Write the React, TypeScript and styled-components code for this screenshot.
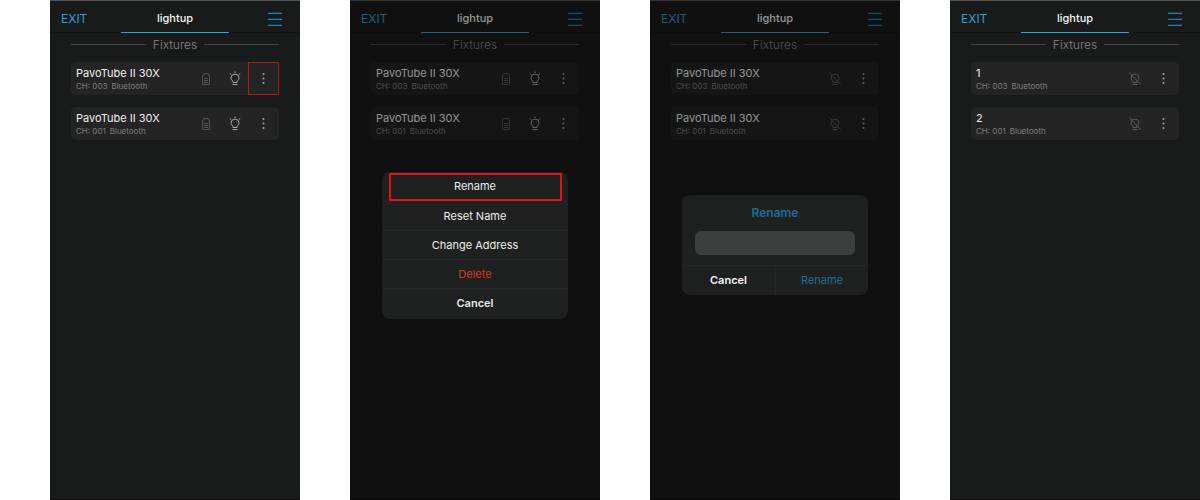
import React from "react";
import styled, { createGlobalStyle, css } from "styled-components";

const GlobalStyle = createGlobalStyle`
  *, *::before, *::after { box-sizing: border-box; }
  body {
    margin: 0;
    background: #ffffff;
    font-family: Inter, "Liberation Sans", sans-serif;
  }
  button, input { font: inherit; color: inherit; }
`;

const Gallery = styled.main`
  display: grid;
  grid-template-columns: repeat(4, 1fr);
  column-gap: 50px;
  padding-left: 50px;
  min-height: 100vh;
`;

const Phone = styled.section`
  position: relative;
  display: flex;
  flex-direction: column;
  background: #191b1a;
  border-top: 1px solid #525453;
  border-bottom: 1px solid #100d10;
`;

const Header = styled.header`
  display: grid;
  grid-template-columns: 1fr 108px 1fr;
  height: 32px;
  padding: 0 10px;
  border-bottom: 1px solid #131514;
`;

const ExitButton = styled.button`
  justify-self: start;
  padding: 4px 1px 0;
  border: 0;
  background: none;
  color: #2b9fd6;
  font-size: 12px;
  line-height: 16px;
  cursor: pointer;
`;

const TabTitle = styled.h1`
  display: flex;
  align-items: center;
  justify-content: center;
  height: 32px;
  margin: 0;
  padding-top: 3px;
  border-bottom: 1px solid #2ba5e0;
  color: #f4f4f4;
  font-size: 11px;
  font-weight: 500;
  line-height: 16px;
`;

const MenuButton = styled.button`
  display: flex;
  align-items: center;
  justify-self: end;
  padding: 4px 8px 0;
  border: 0;
  background: none;
  color: #1585ba;
  cursor: pointer;
`;

const Body = styled.div`
  padding: 5px 21px 0;
`;

const SectionTitle = styled.h2`
  display: flex;
  align-items: center;
  gap: 7px;
  margin: 0 0 10px;
  color: #858786;
  font-size: 12px;
  font-weight: 300;
  line-height: 14px;

  &::before,
  &::after {
    content: "";
    flex: 1;
    height: 1px;
    margin-bottom: 1px;
    background: #434544;
  }
`;

const FixtureList = styled.ul`
  display: flex;
  flex-direction: column;
  gap: 12px;
  margin: 0;
  padding: 0;
  list-style: none;
`;

const FixtureCard = styled.li`
  display: flex;
  height: 33px;
  padding: 0 1px 0 5px;
  border-radius: 5px;
  background: #242424;
`;

const FixtureInfo = styled.div`
  flex: 1;
  padding-top: 4px;
  white-space: nowrap;
`;

const FixtureName = styled.div`
  color: #f0f0f0;
  font-size: 11px;
  line-height: 14px;
`;

const FixtureMeta = styled.div`
  display: flex;
  gap: 4px;
  color: #7d7f7e;
  font-size: 8px;
  line-height: 12px;
`;

const IconSlot = styled.span`
  display: flex;
  align-items: center;
  justify-content: center;
  width: 29px;
  color: #525553;
`;

const IconButton = styled.button<{ $dim?: boolean; $marked?: boolean }>`
  display: flex;
  align-items: center;
  justify-content: center;
  width: 29px;
  margin: 1px 0;
  padding: 0;
  border: 0;
  background: none;
  color: ${({ $dim }) => ($dim ? "#5a5c5a" : "#a2a4a3")};
  cursor: pointer;
  ${({ $marked }) =>
    $marked &&
    css`
      outline: 1px solid #b3181c;
    `}
`;

const Backdrop = styled.div`
  position: absolute;
  inset: -1px 0;
  display: flex;
  align-items: center;
  justify-content: center;
  padding-bottom: 10px;
  background: rgba(0, 0, 0, 0.4);
`;

const Sheet = styled.div`
  width: 186px;
  padding-bottom: 2px;
  border-radius: 8px;
  background: #1f2120;
  overflow: hidden;
`;

const SheetAction = styled.button<{ $tone?: "danger" | "strong"; $marked?: boolean }>`
  position: relative;
  display: block;
  width: 100%;
  padding: 7px 0;
  border: 0;
  background: none;
  color: ${({ $tone }) => ($tone === "danger" ? "#d13a1b" : "#ececec")};
  font-size: 11px;
  font-weight: ${({ $tone }) => ($tone === "strong" ? 600 : 400)};
  line-height: 15px;
  cursor: pointer;

  & + & { border-top: 1px solid #252726; padding-bottom: 6px; }

  ${({ $marked }) =>
    $marked &&
    css`
      &::after {
        content: "";
        position: absolute;
        inset: 1px 6px 0 7px;
        border: 2px solid #dc1417;
      }
    `}
`;

const DialogForm = styled.form`
  width: 186px;
  border-radius: 8px;
  background: #1f2120;
  overflow: hidden;
`;

const DialogBody = styled.div`
  padding: 10px 13px;
`;

const DialogTitle = styled.label`
  display: block;
  margin-bottom: 10px;
  color: #176f9a;
  font-size: 12px;
  font-weight: 600;
  line-height: 16px;
  text-align: center;
`;

const NameInput = styled.input`
  display: block;
  width: 100%;
  height: 24px;
  padding: 0 8px;
  border: 0;
  border-radius: 6px;
  background: #3d3f3e;
  color: #ececec;
  font-size: 12px;
`;

const DialogActions = styled.div`
  display: grid;
  grid-template-columns: 1fr 1fr;
  border-top: 1px solid #252726;
`;

const DialogButton = styled.button<{ $accent?: boolean }>`
  padding: 7px 0;
  border: 0;
  background: none;
  color: ${({ $accent }) => ($accent ? "#176f9a" : "#f4f4f4")};
  font-size: 11px;
  font-weight: ${({ $accent }) => ($accent ? 400 : 600)};
  line-height: 15px;
  cursor: pointer;

  & + & { border-left: 1px solid #252726; }
`;

const MenuIcon = () => (
  <svg width="14" height="14" viewBox="0 0 14 14" fill="currentColor" aria-hidden="true">
    <path d="M0 .8h14v1.300H0zM0 6.800h14v1.300H0zM0 12.700h14v1.300H0z" />
  </svg>
);

const BatteryIcon = () => (
  <svg width="8" height="12" viewBox="0 0 8 12" fill="none" stroke="currentColor" aria-hidden="true">
    <path d="M.5 11.500V2.300L2 1.800V.5h4v1.300l1.500.5v9.200zM2 5.500h4M2 7.500h4M2 9.500h4" />
  </svg>
);

const BulbIcon = () => (
  <svg width="12" height="15" viewBox="0 0 12 15" fill="none" stroke="currentColor" aria-hidden="true">
    <path d="M4 11.500V10.100C2.800 9.400 2 8.300 2 7.100a4 4 0 0 1 8 0c0 1.200-.8 2.300-2 3v1.400zM3.500 13.500h5M6 .5v1.500M.8 2.500l1.500 1.200M11.200 2.500L9.700 3.700" />
  </svg>
);

const BulbOffIcon = () => (
  <svg width="12" height="15" viewBox="0 0 12 15" fill="none" stroke="currentColor" aria-hidden="true">
    <path d="M4 11.500V10.100C2.800 9.400 2 8.300 2 7.100a4 4 0 0 1 8 0c0 1.200-.8 2.300-2 3v1.400zM3.500 13.500h5M.5 1.500l11 12" />
  </svg>
);

const DotsIcon = () => (
  <svg width="3" height="13" viewBox="0 0 3 13" fill="currentColor" aria-hidden="true">
    <circle cx="1.500" cy="2" r="1" />
    <circle cx="1.500" cy="6.500" r="1" />
    <circle cx="1.500" cy="11" r="1" />
  </svg>
);

type Fixture = { name: string; channel: string };

type ScreenProps = {
  fixtures: Fixture[];
  lit?: boolean;
  markFirst?: boolean;
  children?: React.ReactNode;
};

const Screen = ({ fixtures, lit, markFirst, children }: ScreenProps) => (
  <Phone>
    <Header>
      <ExitButton type="button">EXIT</ExitButton>
      <TabTitle>lightup</TabTitle>
      <MenuButton type="button" aria-label="Menu">
        <MenuIcon />
      </MenuButton>
    </Header>
    <Body>
      <SectionTitle>Fixtures</SectionTitle>
      <FixtureList>
        {fixtures.map((fixture, index) => (
          <FixtureCard key={fixture.channel}>
            <FixtureInfo>
              <FixtureName>{fixture.name}</FixtureName>
              <FixtureMeta>
                <span>CH: {fixture.channel}</span>
                <span>Bluetooth</span>
              </FixtureMeta>
            </FixtureInfo>
            {lit && (
              <IconSlot>
                <BatteryIcon />
              </IconSlot>
            )}
            <IconButton type="button" $dim={!lit} aria-label="Toggle light">
              {lit ? <BulbIcon /> : <BulbOffIcon />}
            </IconButton>
            <IconButton type="button" $marked={markFirst && index === 0} aria-label="More options">
              <DotsIcon />
            </IconButton>
          </FixtureCard>
        ))}
      </FixtureList>
    </Body>
    {children}
  </Phone>
);

const tubes: Fixture[] = [
  { name: "PavoTube II 30X", channel: "003" },
  { name: "PavoTube II 30X", channel: "001" },
];

const renamed: Fixture[] = [
  { name: "1", channel: "003" },
  { name: "2", channel: "001" },
];

export default function App() {
  return (
    <>
      <GlobalStyle />
      <Gallery>
        <Screen fixtures={tubes} lit markFirst />
        <Screen fixtures={tubes} lit>
          <Backdrop>
            <Sheet>
              <SheetAction type="button" $marked>Rename</SheetAction>
              <SheetAction type="button">Reset Name</SheetAction>
              <SheetAction type="button">Change Address</SheetAction>
              <SheetAction type="button" $tone="danger">Delete</SheetAction>
              <SheetAction type="button" $tone="strong">Cancel</SheetAction>
            </Sheet>
          </Backdrop>
        </Screen>
        <Screen fixtures={tubes}>
          <Backdrop>
            <DialogForm onSubmit={(event) => event.preventDefault()}>
              <DialogBody>
                <DialogTitle htmlFor="fixture-name">Rename</DialogTitle>
                <NameInput id="fixture-name" type="text" />
              </DialogBody>
              <DialogActions>
                <DialogButton type="button">Cancel</DialogButton>
                <DialogButton type="submit" $accent>Rename</DialogButton>
              </DialogActions>
            </DialogForm>
          </Backdrop>
        </Screen>
        <Screen fixtures={renamed} />
      </Gallery>
    </>
  );
}
